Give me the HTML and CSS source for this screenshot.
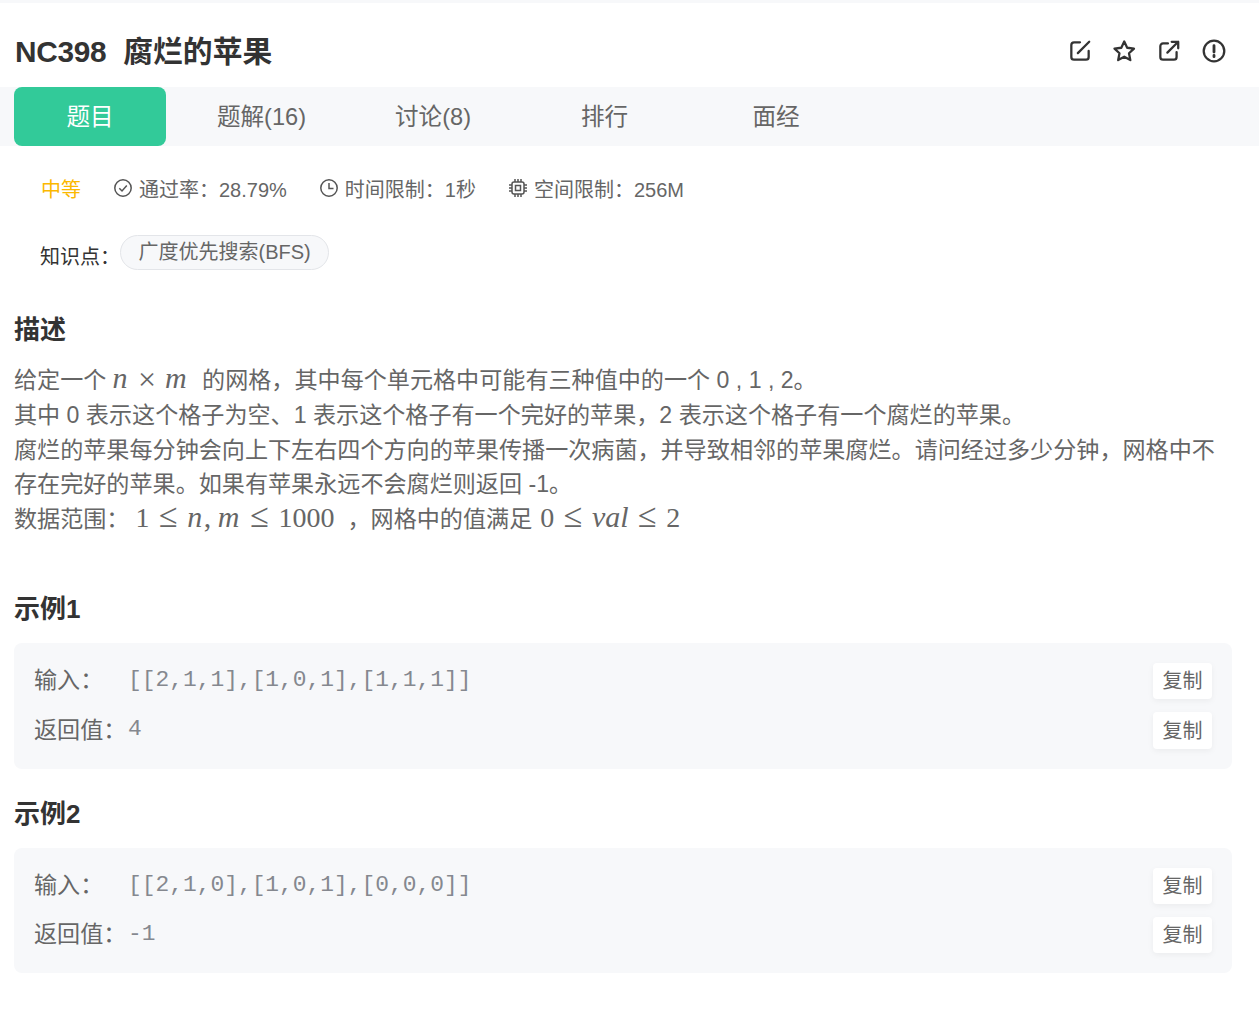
FILE: index.html
```html
<!DOCTYPE html>
<html lang="zh-CN">
<head>
<meta charset="utf-8">
<title>NC398 腐烂的苹果</title>
<link rel="stylesheet" href="styles.css">
</head>
<body>
<div class="page">
  <header class="head">
    <h1 class="title"><span class="latin">NC398</span><span>腐烂的苹果</span></h1>
    <div class="actions">
      <svg class="act" viewBox="0 0 24 24"><path d="M12 4H6.500A2.500 2.500 0 0 0 4 6.500V17.500A2.500 2.500 0 0 0 6.500 20H17.500A2.500 2.500 0 0 0 20 17.500V12M10 14L20.500 3.500"/></svg>
      <svg class="act" viewBox="0 0 24 24"><path d="M11.300 3.200L14 9L20.300 9.800L15.700 14.100L16.900 20.400L11.300 17.300L5.700 20.400L6.900 14.100L2.300 9.800L8.600 9Z"/></svg>
      <svg class="act" viewBox="0 0 24 24"><path d="M11 5H6.500A2.500 2.500 0 0 0 4 7.500V17.500A2.500 2.500 0 0 0 6.500 20H16.500A2.500 2.500 0 0 0 19 17.500V13M10.500 13.500L20.500 3.500M14.500 3.500H20.500V9.500"/></svg>
      <svg class="act" viewBox="0 0 24 24"><circle cx="12" cy="12" r="9.500"/><path class="bold" d="M12 7V13M12 16V17.200"/></svg>
    </div>
  </header>
  <nav class="tabs">
    <a class="tab active">题目</a>
    <a class="tab">题解(16)</a>
    <a class="tab">讨论(8)</a>
    <a class="tab">排行</a>
    <a class="tab">面经</a>
  </nav>
  <div class="meta">
    <span class="level">中等</span>
    <span class="stat"><svg class="ico" viewBox="0 0 20 20"><circle cx="10" cy="10" r="8.200"/><path d="M6.300 10.300L9 13L13.800 7.500"/></svg>通过率：28.79%</span>
    <span class="stat"><svg class="ico" viewBox="0 0 20 20"><circle cx="10" cy="10" r="8.200"/><path d="M10 5V10.500H14.500"/></svg>时间限制：1秒</span>
    <span class="stat"><svg class="ico" viewBox="0 0 20 20"><rect x="4" y="4" width="12" height="12" rx="2"/><rect x="7.500" y="7.500" width="5" height="5"/><path d="M7 1V4M10 1V4M13 1V4M7 16V19M10 16V19M13 16V19M1 7H4M1 10H4M1 13H4M16 7H19M16 10H19M16 13H19"/></svg>空间限制：256M</span>
  </div>
  <div class="know">
    <span class="know-label">知识点：</span>
    <span class="tag">广度优先搜索(BFS)</span>
  </div>
  <section class="desc">
    <h2 class="h">描述</h2>
    <div class="para">
      <p>给定一个<span class="m m1"><i class="v">n</i><span class="op">×</span><i class="v">m</i></span>的网格，其中每个单元格中可能有三种值中的一个 0 , 1 , 2。</p>
      <p>其中 0 表示这个格子为空、1 表示这个格子有一个完好的苹果，2 表示这个格子有一个腐烂的苹果。</p>
      <p>腐烂的苹果每分钟会向上下左右四个方向的苹果传播一次病菌，并导致相邻的苹果腐烂。请问经过多少分钟，网格中不存在完好的苹果。如果有苹果永远不会腐烂则返回 -1。</p>
      <p>数据范围：<span class="m m2">1<span class="op">≤</span><i class="v">n</i><span class="sep">,</span><i class="v">m</i><span class="op">≤</span>1000</span>，网格中的值满足<span class="m m4">0<span class="op">≤</span><i class="v word">val</i><span class="op">≤</span>2</span></p>
    </div>
  </section>
  <section class="ex ex1">
    <h2 class="h">示例1</h2>
    <div class="box">
      <div class="row"><span class="lab">输入：</span><code class="code">[[2,1,1],[1,0,1],[1,1,1]]</code><button class="copy">复制</button></div>
      <div class="row"><span class="lab">返回值：</span><code class="code">4</code><button class="copy">复制</button></div>
    </div>
  </section>
  <section class="ex ex2">
    <h2 class="h">示例2</h2>
    <div class="box">
      <div class="row"><span class="lab">输入：</span><code class="code">[[2,1,0],[1,0,1],[0,0,0]]</code><button class="copy">复制</button></div>
      <div class="row"><span class="lab">返回值：</span><code class="code">-1</code><button class="copy">复制</button></div>
    </div>
  </section>
</div>
</body>
</html>
```
FILE: styles.css
```css
* { box-sizing: border-box; }
html, body { margin: 0; padding: 0; background: #fff; }
body { font-family: "Liberation Sans", "Noto Sans CJK SC", sans-serif; color: #666; height: 1017px; overflow: hidden; }
.page { border-top: 3px solid #f7f8fa; }
p, h1, h2 { margin: 0; }

.head { height: 84px; display: flex; align-items: center; justify-content: space-between; padding: 14px 32px 0 15px; }
.title { font-size: 29.800px; line-height: 40px; font-weight: 700; color: #333; display: flex; gap: 17px; }
.latin { letter-spacing: -.3px; }
.actions { display: flex; gap: 18.700px; margin-top: -2px; }
.act { width: 26px; height: 26px; fill: none; stroke: #333; stroke-width: 2.100; stroke-linecap: round; stroke-linejoin: round; }
.act .bold { stroke-width: 2.600; }

.tabs { height: 59px; background: #f7f8fa; padding-left: 14px; display: grid; grid-template-columns: repeat(5, 152px); column-gap: 19.500px; }
.tab { display: flex; align-items: center; justify-content: center; padding-bottom: 4px; font-size: 23.600px; color: #666; border-radius: 8px 8px 0 0; }
.tab.active { background: #32ca99; color: #fff; border-radius: 8px; }

.meta { display: flex; align-items: center; height: 28px; margin: 30px 0 0 41px; font-size: 20px; line-height: 28px; }
.level { color: #fbb800; margin-right: 32px; }
.stat { display: flex; align-items: center; margin-right: 32px; }
.ico { width: 20px; height: 20px; margin-right: 6px; margin-top: -4px; fill: none; stroke: #555; stroke-width: 1.500; }

.know { display: flex; align-items: center; height: 36px; margin: 30px 0 0 40px; font-size: 20px; }
.know-label { color: #333; margin-top: 6px; width: 80px; }
.tag { height: 35px; line-height: 32px; padding: 0 17.500px; background: #f7f8fa; border: 1px solid #e3e5e9; border-radius: 18px; color: #666; }

.desc { padding: 0 27px 0 14px; margin-top: 42px; }
.h { font-size: 26px; line-height: 36px; font-weight: 700; color: #333; }
.para { margin-top: 15.400px; font-size: 23.100px; line-height: 34.650px; }
.m { font-family: "Liberation Serif", serif; font-size: 28px; line-height: 0; color: #666; }
.v { font-size: 30px; letter-spacing: 1.500px; }
.v.word { letter-spacing: 0; }
.op { font-size: 34px; margin: 0 9.500px; }
.sep { margin-right: 6.500px; font-size: 30px; }
.m1 { margin: 0 14px 0 6px; }
.m1 .op { font-size: 32px; margin: 0 9px; vertical-align: -2px; }
.m2 { margin: 0 13px 0 6px; }
.m4 { margin-left: 8px; }

.ex1 { margin-top: 54px; }
.ex2 { margin-top: 27px; }
.box { margin: 16px 27px 0 14px; background: #f7f8fa; border-radius: 8px; padding: 20px; display: flex; flex-direction: column; gap: 13px; }
.ex .h { padding-left: 14px; }
.row { display: flex; align-items: center; height: 36.500px; }
.ex2 .row { height: 36px; }
.lab { font-size: 23.100px; width: 94px; flex: none; padding-bottom: 5px; }
.code { font-family: "Liberation Mono", monospace; font-size: 22.900px; color: #85888f; flex: 1; padding-bottom: 2px; }
.copy { width: 59px; height: 100%; padding: 0 0 2px; border: 0; background: #fff; border-radius: 4px; box-shadow: 0 2px 6px rgba(0, 0, 0, .05); font: 20px "Liberation Sans", "Noto Sans CJK SC", sans-serif; color: #666; }
```
